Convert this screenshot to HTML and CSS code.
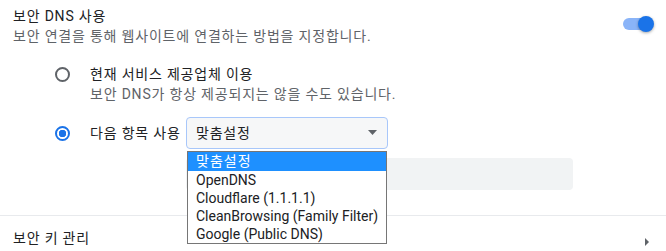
FILE: index.html
```html
<!DOCTYPE html>
<html lang="ko">
<head>
  <meta charset="UTF-8" />
  <title>보안 DNS 설정</title>
  <link rel="stylesheet" href="styles.css">
</head>
<body>

<div class="section">
  <div class="setting-row">
    <div class="row-text">
      <div class="label">보안 DNS 사용</div>
      <div class="sublabel">보안 연결을 통해 웹사이트에 연결하는 방법을 지정합니다.</div>
    </div>
    <span class="toggle"><span class="toggle-knob"></span></span>
  </div>

  <div class="radio-group">
    <div class="radio-option">
      <span class="radio"></span>
      <div class="row-text">
        <div class="label">현재 서비스 제공업체 이용</div>
        <div class="sublabel">보안 DNS가 항상 제공되지는 않을 수도 있습니다.</div>
      </div>
    </div>

    <div class="radio-option custom-option">
      <span class="radio checked"></span>
      <span class="label option-label">다음 항목 사용</span>
      <div class="select-wrap">
        <div class="select">
          <span>맞춤설정</span>
          <svg class="select-arrow" width="9" height="5" viewBox="0 0 9 5"><path d="M0 0h9L4.5 5z" fill="#5f6368"/></svg>
        </div>
        <ul class="dropdown">
          <li class="selected">맞춤설정</li>
          <li>OpenDNS</li>
          <li>Cloudflare (1.1.1.1)</li>
          <li>CleanBrowsing (Family Filter)</li>
          <li>Google (Public DNS)</li>
        </ul>
      </div>
    </div>

    <div class="custom-input"></div>
  </div>
</div>

<div class="divider"></div>

<div class="section">
  <div class="setting-row link-row">
    <div class="label">보안 키 관리</div>
    <svg class="row-arrow" width="4" height="8" viewBox="0 0 4 8"><path d="M0 0l4 4-4 4z" fill="#5f6368"/></svg>
  </div>
</div>

</body>
</html>
```

FILE: styles.css
```css
body {
  margin: 0;
  font-family: Roboto, "Noto Sans CJK KR", sans-serif;
  font-size: 14px;
  line-height: 20px;
  color: #202124;
  background-color: white;
}

.section {
  padding: 0 12px 0 13px;
}

.setting-row {
  display: flex;
  justify-content: space-between;
  padding-top: 6px;
}

.label,
.sublabel {
  letter-spacing: 0.8px;
  white-space: nowrap;
}

.sublabel {
  color: #5f6368;
}

/* Toggle */
.toggle {
  position: relative;
  width: 26px;
  height: 12px;
  margin: 12px 5px 0 0;
  border-radius: 6px;
  background-color: #8ab4f8;
}

.toggle-knob {
  position: absolute;
  top: -2px;
  right: -5px;
  width: 16px;
  height: 16px;
  border-radius: 50%;
  background-color: #1a73e8;
  box-shadow: 0 1px 3px rgba(0, 0, 0, 0.35);
}

/* Radios */
.radio-group {
  padding-left: 42px;
  margin-top: 18px;
}

.radio-option {
  display: flex;
  align-items: flex-start;
  gap: 20px;
}

.radio {
  box-sizing: border-box;
  flex: none;
  width: 15px;
  height: 15px;
  margin-top: 3px;
  border: 2px solid #5f6368;
  border-radius: 50%;
}

.radio.checked {
  border-color: #1a73e8;
  background: radial-gradient(circle, #1a73e8 0 3.5px, transparent 4px);
}

.custom-option {
  align-items: center;
  margin-top: 13px;
}

.custom-option .radio {
  margin-top: 0;
}

.option-label {
  flex: none;
  width: 76px;
}

/* Select + open list */
.select-wrap {
  position: relative;
}

.select {
  box-sizing: border-box;
  display: flex;
  align-items: center;
  justify-content: space-between;
  width: 202px;
  height: 32px;
  padding: 0 10px 0 9px;
  border: 1px solid #a8c7fa;
  border-radius: 4px;
  background-color: #f6f7f8;
  letter-spacing: 0.8px;
}

.select-arrow {
  margin-top: -1px;
}

.dropdown {
  position: absolute;
  z-index: 10;
  top: 34px;
  left: 1px;
  box-sizing: border-box;
  width: 200px;
  margin: 0;
  padding: 0;
  list-style: none;
  border: 1px solid #767676;
  background-color: white;
  line-height: 18px;
}

.dropdown li {
  padding: 0 8px;
  white-space: nowrap;
}

.dropdown li.selected {
  background-color: #1e90ff;
  color: white;
  line-height: 19px;
  letter-spacing: 1px;
}

.custom-input {
  width: 387px;
  height: 32px;
  margin: 9px 0 0 131px;
  border-radius: 4px;
  background-color: #f1f3f4;
}

.divider {
  margin-top: 25px;
  border-top: 1px solid #e8eaed;
}

.link-row {
  align-items: center;
  padding-top: 12px;
}

.row-arrow {
  margin: 8px 5px 0 0;
}
```
